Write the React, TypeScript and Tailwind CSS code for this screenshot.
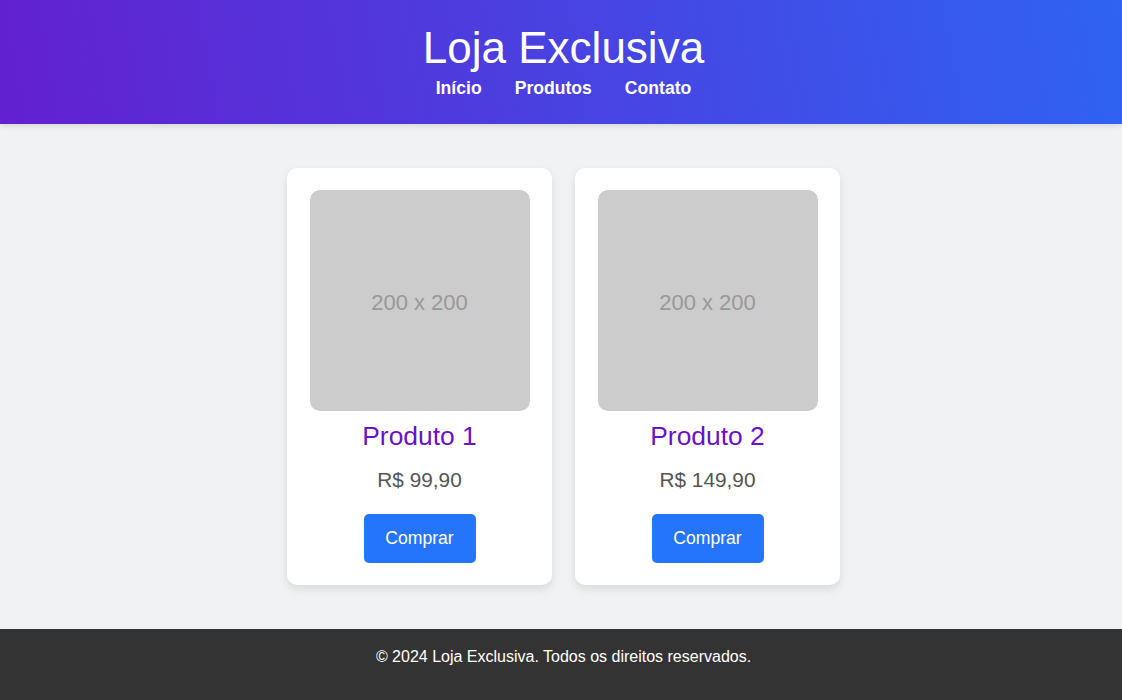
const products = [
    { name: "Produto 1", price: "R$ 99,90" },
    { name: "Produto 2", price: "R$ 149,90" }
];

const ProductCard = ({ name, price }: { name: string; price: string }) => (
    <div className="w-[265px] bg-white rounded-[10px] shadow-[0_4px_10px_rgba(0,0,0,0.1)] px-[23px] pt-[22px] pb-[22px] flex flex-col items-center">
        <div className="w-[220px] h-[221px] bg-[#cccccc] rounded-[10px] flex items-center justify-center pt-[4px] text-[#999999] text-[22px] leading-none">
            200 x 200
        </div>
        <h3 className="mt-[10px] text-[26.4px] leading-[30px] text-[#6a11cb]">{name}</h3>
        <p className="mt-[17px] text-[20.8px] leading-[24px] text-[#555555]">{price}</p>
        <button className="mt-[22px] w-[112px] h-[49px] bg-[#2575fc] text-white text-[17.6px] rounded-[5px] flex items-center justify-center">
            Comprar
        </button>
    </div>
);

const App = () => {
    return (
        <div className="min-h-[700px] flex flex-col bg-[#f1f2f4] font-['Liberation_Sans',Arial,sans-serif]">
            <header className="h-[124px] bg-[linear-gradient(80deg,#6320d0_0%,#2f63f2_100%)] text-white shadow-[0_2px_6px_rgba(0,0,0,0.12)] relative z-10">
                <div className="pl-[5px] pt-[23px] flex flex-col items-center">
                    <h1 className="text-[44px] leading-[50px]">Loja Exclusiva</h1>
                    <nav className="mt-[5px] flex gap-[33px] text-[17.6px] leading-[20px] font-bold">
                        <a href="#">Início</a>
                        <a href="#">Produtos</a>
                        <a href="#">Contato</a>
                    </nav>
                </div>
            </header>

            <main className="h-[505px] pl-[5px] flex justify-center items-start pt-[44px] gap-[23px]">
                {products.map((p) => (
                    <ProductCard key={p.name} name={p.name} price={p.price} />
                ))}
            </main>

            <footer className="h-[71px] bg-[#333333] text-white pl-[5px] pt-[19px] text-center text-[16px] leading-[18px]">
                © 2024 Loja Exclusiva. Todos os direitos reservados.
            </footer>
        </div>
    );
};

export default App;
